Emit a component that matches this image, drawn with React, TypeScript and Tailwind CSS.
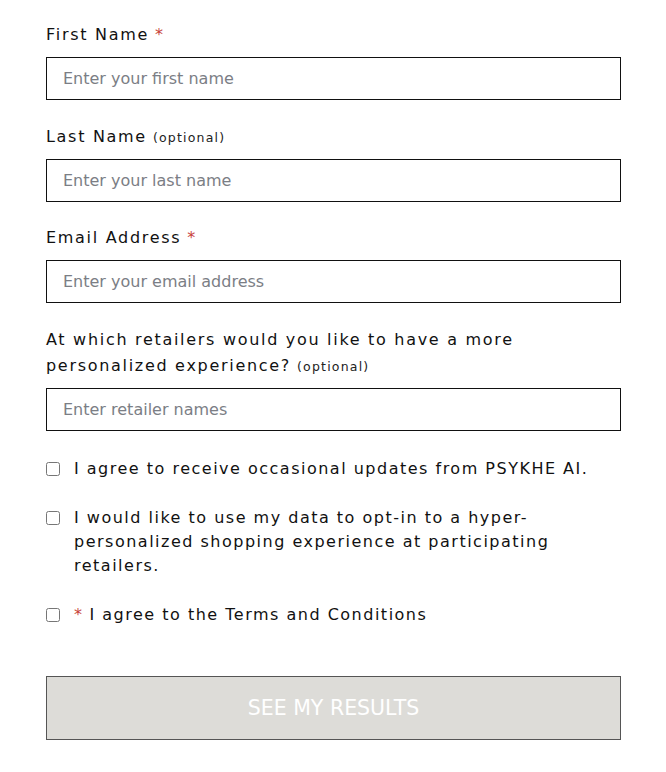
import { useState } from 'react';

const labelFont = { fontFamily: '"DejaVu Sans", "Liberation Sans", sans-serif' };

const Field = ({
    label,
    placeholder,
    required,
    optional,
}: {
    label: React.ReactNode;
    placeholder: string;
    required?: boolean;
    optional?: boolean;
}) => (
    <div className="flex flex-col">
        <label className="text-[16px] leading-[26px] tracking-[1.7px] text-[#111] mb-[9px]">
            {label}
            {required && <span className="text-[#c8423a] ml-[6px] leading-none">*</span>}
            {optional && (
                <span className="text-[12.5px] leading-none tracking-[1.2px] ml-[6px] text-[#222]">(optional)</span>
            )}
        </label>
        <input
            type="text"
            placeholder={placeholder}
            className="h-[43px] w-full border border-[#111] px-[16px] text-[16px] text-[#333] placeholder:text-[#7b7e85] outline-none"
        />
    </div>
);

const Check = ({ children }: { children: React.ReactNode }) => {
    const [checked, setChecked] = useState(false);
    return (
        <label className="flex items-start gap-[14px] cursor-pointer">
            <span className="h-[24px] flex items-center shrink-0">
                <input
                    type="checkbox"
                    checked={checked}
                    onChange={() => setChecked(!checked)}
                    className="w-[14px] h-[14px] m-0 accent-[#333]"
                />
            </span>
            <span className="text-[16px] leading-[24px] tracking-[1.5px] text-[#111]">{children}</span>
        </label>
    );
};

export default function App() {
    return (
        <div className="bg-white min-h-screen" style={labelFont}>
            <form className="w-[575px] ml-[46px] pt-[22px] flex flex-col">
                <div className="flex flex-col gap-[23.5px]">
                    <Field label="First Name" placeholder="Enter your first name" required />
                    <Field label="Last Name" placeholder="Enter your last name" optional />
                    <Field label="Email Address" placeholder="Enter your email address" required />
                    <Field
                        label="At which retailers would you like to have a more personalized experience?"
                        placeholder="Enter retailer names"
                        optional
                    />
                </div>

                <div className="flex flex-col gap-[25px] mt-[26.5px]">
                    <Check>I agree to receive occasional updates from PSYKHE AI.</Check>
                    <Check>
                        I would like to use my data to opt-in to a hyper-personalized shopping experience at
                        participating retailers.
                    </Check>
                    <Check>
                        <span className="text-[#c8423a] mr-[6px]">*</span>I agree to the Terms and Conditions
                    </Check>
                </div>

                <button
                    type="button"
                    className="mt-[49px] h-[64px] w-full bg-[#dddcd8] border border-[#555] text-white text-[20.5px] uppercase"
                >
                    See my results
                </button>
            </form>
        </div>
    );
}
